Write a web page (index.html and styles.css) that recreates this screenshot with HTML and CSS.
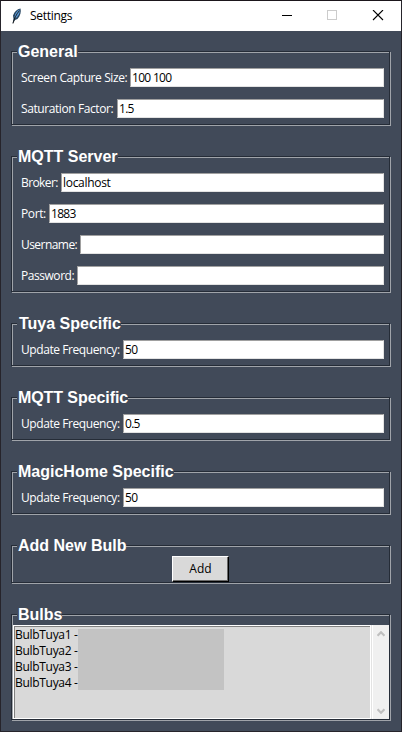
FILE: index.html
```html
<!DOCTYPE html>
<html lang="en">
<head>
<meta charset="utf-8">
<title>Settings</title>
<link rel="stylesheet" href="styles.css">
</head>
<body>
<div class="window">
  <header class="titlebar">
    <svg class="feather" width="12" height="18" viewBox="0 0 12 18">
      <path d="M1.500 16.500 L2.500 12 L2 8.500 C3.500 4.500 6 2 9.500 1.500 C10.300 4.500 9.500 9 6.500 12 L4 13 Z" fill="#24435f"/>
      <path d="M3.500 10 C4 6 6 3.500 9 2.500 C9 6 7.500 9 4.500 11.500 Z" fill="#5c9ad6"/>
      <path d="M2 16.500 C3.500 11 5.500 7 8.500 3.500" fill="none" stroke="#111" stroke-width=".9"/>
    </svg>
    <h1 class="title">Settings</h1>
    <svg class="controls" width="106" height="12" viewBox="0 0 106 12" shape-rendering="crispEdges">
      <path d="M0 5.500H10" stroke="#000"/>
      <rect x="45.500" y="0.500" width="9" height="9" fill="none" stroke="#ccc"/>
      <path d="M91 0L101 10M101 0L91 10" stroke="#000" stroke-width="1.100" shape-rendering="auto"/>
    </svg>
  </header>
  <main class="content">
    <section class="group">
      <h2 class="legend">General</h2>
      <label class="row"><span class="name capture">Screen Capture Size:</span><input class="entry number" value="100 100"></label>
      <label class="row"><span class="name saturation">Saturation Factor:</span><input class="entry number" value="1.5"></label>
    </section>
    <section class="group">
      <h2 class="legend">MQTT Server</h2>
      <label class="row"><span class="name broker">Broker:</span><input class="entry" value="localhost"></label>
      <label class="row"><span class="name port">Port:</span><input class="entry number" value="1883"></label>
      <label class="row"><span class="name username">Username:</span><input class="entry"></label>
      <label class="row"><span class="name password">Password:</span><input class="entry"></label>
    </section>
    <section class="group">
      <h2 class="legend legend-tuya">Tuya Specific</h2>
      <label class="row"><span class="name frequency">Update Frequency:</span><input class="entry number" value="50"></label>
    </section>
    <section class="group">
      <h2 class="legend legend-mqtt">MQTT Specific</h2>
      <label class="row"><span class="name frequency">Update Frequency:</span><input class="entry number" value="0.5"></label>
    </section>
    <section class="group">
      <h2 class="legend">MagicHome Specific</h2>
      <label class="row"><span class="name frequency">Update Frequency:</span><input class="entry number" value="50"></label>
    </section>
    <section class="group group-add">
      <h2 class="legend">Add New Bulb</h2>
      <button class="add">Add</button>
    </section>
    <section class="group group-bulbs">
      <h2 class="legend">Bulbs</h2>
      <div class="listbox">
        <ul class="list">
          <li>BulbTuya1 -</li>
          <li>BulbTuya2 -</li>
          <li>BulbTuya3 -</li>
          <li>BulbTuya4 -</li>
        </ul>
        <div class="mask"></div>
      </div>
      <div class="scrollbar">
        <svg width="8" height="6" viewBox="0 0 8 6"><path d="M.5 4.800L4 1.300L7.500 4.800" fill="none" stroke="#bfbfbf" stroke-width="2.200"/></svg>
        <svg width="8" height="6" viewBox="0 0 8 6"><path d="M.5 1.200L4 4.700L7.500 1.200" fill="none" stroke="#bfbfbf" stroke-width="2.200"/></svg>
      </div>
    </section>
  </main>
</div>
</body>
</html>
```
FILE: styles.css
```css
* { box-sizing: border-box; }
body { margin: 0; font: 12px/16px "Open Sans", "Noto Sans", sans-serif; }
.window {
  width: 402px; height: 732px;
  border: 1px solid #26242b; border-top-color: #1b161b;
  background: #414a59;
  overflow: hidden;
}
.titlebar { height: 30px; background: #fff; display: flex; align-items: center; padding: 0 12px 0 10px; }
.title { margin: 0 auto 0 7px; font: 12px/16px "Open Sans", sans-serif; letter-spacing: -.3px; }
.controls { margin-right: 1px; }
.content { padding: 20px 10px 0; display: flex; flex-direction: column; gap: 30px; }
.group {
  position: relative;
  width: 380px;
  padding: 17px 7px 8px 10px;
  display: flex; flex-direction: column; gap: 12px;
}
.group::before, .group::after { content: ""; position: absolute; pointer-events: none; }
.group::before { inset: 0 1px 1px 0; border: 1px solid #252c37; z-index: 1; }
.group::after { inset: 1px 0 0 1px; border: 1px solid #a0a4aa; }
.legend {
  position: absolute; z-index: 2; left: 6px; top: -8px;
  margin: 0; padding-left: 1px; height: 18px;
  background: #414a59; color: #fff;
  font: bold 16px/18px "Liberation Sans", Arial, sans-serif;
  white-space: nowrap;
}
.legend-tuya { padding-left: 2px; }
.legend-mqtt { letter-spacing: -.08px; }
.row { display: flex; height: 19px; align-items: center; }
.name { color: #fff; white-space: nowrap; flex: none; }
.capture { width: 109px; letter-spacing: -.4px; }
.saturation { width: 96px; letter-spacing: -.41px; }
.broker { width: 40px; letter-spacing: -.6px; }
.port { width: 28px; letter-spacing: -.4px; }
.username { width: 59px; letter-spacing: -.55px; }
.password { width: 56px; letter-spacing: -.45px; }
.frequency { width: 102px; letter-spacing: -.42px; }
.entry {
  flex: 1; min-width: 0; height: 19px; margin: 0; padding: 0 1px;
  border: 1px solid; border-color: #a0a0a0 #e3e3e3 #e3e3e3 #a0a0a0; border-radius: 0;
  background: #fff; color: #000; outline: 0;
  font: 12px/16px "Open Sans", sans-serif; letter-spacing: -.3px;
}
.number { letter-spacing: -.7px; }
.group-add { height: 39px; padding: 11px 0 0; align-items: center; }
.add {
  width: 57px; height: 26px; padding: 0; margin-right: 1px;
  position: relative; z-index: 3;
  border: 1px solid; border-color: #fff #000 #000 #fff; border-radius: 0;
  box-shadow: inset -1px -1px #696969;
  background: #d9d9d9; color: #000;
  font: 12px/16px "Open Sans", sans-serif;
}
.group-bulbs { height: 107px; padding: 11px 2px 2px; flex-direction: row; gap: 0; }
.listbox {
  width: 358px; height: 94px; position: relative; padding: 1px;
  border: 1px solid #fff; background: #d9d9d9;
  box-shadow: inset 1px 1px #808080;
}
.list { list-style: none; margin: 0; padding: 0; letter-spacing: -.3px; }
.mask { position: absolute; left: 64px; top: 3px; width: 146px; height: 61px; background: #c3c3c3; }
.scrollbar {
  flex: 1; height: 94px; background: #f0f0f0;
  box-shadow: inset 1px 0 #e3e3e3, inset 2px 0 #fff;
  display: flex; flex-direction: column; justify-content: space-between; align-items: center;
  padding: 6px 0 5px 1px;
}
```
